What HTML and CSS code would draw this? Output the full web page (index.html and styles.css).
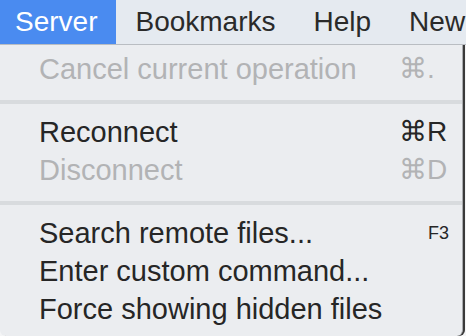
FILE: index.html
```html
<!DOCTYPE html>
<html lang="en">
<head>
    <meta charset="UTF-8">
    <title>Server menu</title>
    <link rel="stylesheet" href="styles.css">
</head>
<body>
    <div class="menubar">
        <div class="menubar-item active">Server</div>
        <div class="menubar-item">Bookmarks</div>
        <div class="menubar-item">Help</div>
        <div class="menubar-item">New</div>
    </div>
    <div class="menu">
        <div class="menu-item disabled">
            <span class="label">Cancel current operation</span>
            <span class="shortcut">⌘.</span>
        </div>
        <div class="separator"></div>
        <div class="menu-item">
            <span class="label">Reconnect</span>
            <span class="shortcut">⌘R</span>
        </div>
        <div class="menu-item disabled">
            <span class="label">Disconnect</span>
            <span class="shortcut">⌘D</span>
        </div>
        <div class="separator"></div>
        <div class="menu-item">
            <span class="label">Search remote files...</span>
            <span class="shortcut fkey">F3</span>
        </div>
        <div class="menu-item">
            <span class="label">Enter custom command...</span>
            <span class="shortcut"></span>
        </div>
        <div class="menu-item">
            <span class="label">Force showing hidden files</span>
            <span class="shortcut"></span>
        </div>
    </div>
</body>
</html>
```

FILE: styles.css
```css
body {
    margin: 0;
    width: 466px;
    height: 336px;
    overflow: hidden;
    background: #f4f5f6;
    font-family: 'Liberation Sans', Arial, sans-serif;
    color: #262626;
}

/* Top menu bar */
.menubar {
    display: flex;
    height: 44px;
    background: #e5eaf0;
    border-bottom: 1px solid #b9bdc2;
    white-space: nowrap;
    overflow: hidden;
}

.menubar-item {
    padding: 0 19px;
    font-size: 28px;
    line-height: 44px;
    color: #2a2a2a;
}

.menubar-item:first-child {
    padding-left: 15px;
}

.menubar-item.active {
    background: #4a8bf0;
    color: #fff;
}

/* Dropdown */
.menu {
    width: 463px;
    height: 291px;
    box-sizing: border-box;
    padding: 5px 0 0;
    background: #ebedf0;
    border-right: 1px solid #a9abae;
    border-radius: 0 0 6px 6px;
    box-shadow: 2px 0 0 #3a3a3a;
}

.menu-item {
    display: grid;
    grid-template-columns: 1fr 50px;
    padding: 0 13px 0 39px;
    height: 38px;
    font-size: 29px;
    line-height: 38px;
    white-space: nowrap;
}

.menu-item.disabled {
    color: #b2b3b5;
}

.shortcut {
    font-size: 28px;
}

.fkey {
    font-size: 18px;
    text-align: right;
}

.separator {
    height: 4px;
    margin: 12px 0 9px;
    background: #d8dbde;
}
```
